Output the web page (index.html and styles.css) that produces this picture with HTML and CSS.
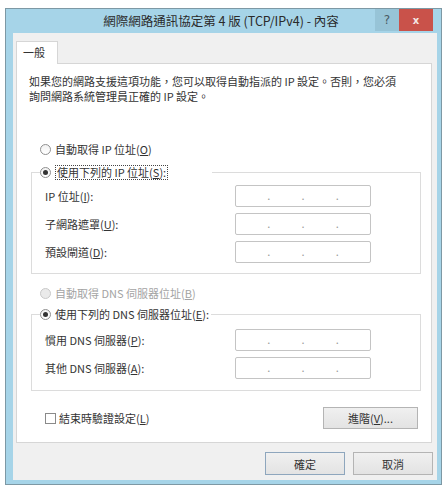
FILE: index.html
```html
<!DOCTYPE html>
<html lang="zh-Hant">
<head>
<meta charset="utf-8">
<title>網際網路通訊協定第 4 版 (TCP/IPv4) - 內容</title>
<link rel="stylesheet" href="styles.css">
</head>
<body>
<div class="window">
  <div class="titlebar">
    <div class="title">網際網路通訊協定第 4 版 (TCP/IPv4) - 內容</div>
    <div class="cap-btn help">?</div>
    <div class="cap-btn close">x</div>
  </div>
  <div class="frame-body">
    <div class="client">
      <div class="tabs"><div class="tab">一般</div></div>
      <div class="panel">
        <p class="desc">如果您的網路支援這項功能，您可以取得自動指派的 IP 設定。否則，您必須<br>詢問網路系統管理員正確的 IP 設定。</p>

        <div class="radio-row r-auto-ip"><span class="radio"></span><span>自動取得 IP 位址(<u>O</u>)</span></div>

        <fieldset class="group g-ip">
          <legend class="legend"><span class="radio checked"></span><span class="focus">使用下列的 IP 位址(<u>S</u>):</span></legend>
          <div class="field"><span class="lbl">IP 位址(<u>I</u>):</span><span class="ipbox"><i>.</i><i>.</i><i>.</i></span></div>
          <div class="field"><span class="lbl">子網路遮罩(<u>U</u>):</span><span class="ipbox"><i>.</i><i>.</i><i>.</i></span></div>
          <div class="field"><span class="lbl">預設閘道(<u>D</u>):</span><span class="ipbox"><i>.</i><i>.</i><i>.</i></span></div>
        </fieldset>

        <div class="radio-row r-auto-dns disabled"><span class="radio"></span><span>自動取得 DNS 伺服器位址(<u>B</u>)</span></div>

        <fieldset class="group g-dns">
          <legend class="legend"><span class="radio checked"></span><span>使用下列的 DNS 伺服器位址(<u>E</u>):</span></legend>
          <div class="field"><span class="lbl">慣用 DNS 伺服器(<u>P</u>):</span><span class="ipbox"><i>.</i><i>.</i><i>.</i></span></div>
          <div class="field"><span class="lbl">其他 DNS 伺服器(<u>A</u>):</span><span class="ipbox"><i>.</i><i>.</i><i>.</i></span></div>
        </fieldset>

        <div class="bottom-row">
          <div class="check-row"><span class="checkbox"></span><span>結束時驗證設定(<u>L</u>)</span></div>
          <button class="btn adv">進階(<u>V</u>)...</button>
        </div>
      </div>
      <div class="footer">
        <button class="btn ok">確定</button>
        <button class="btn">取消</button>
      </div>
    </div>
  </div>
</div>
</body>
</html>
```

FILE: styles.css
```css
* { box-sizing: border-box; }

html, body {
  margin: 0;
  padding: 0;
  background: #ffffff;
}

body {
  font-family: "Noto Sans CJK TC", "Noto Sans", sans-serif;
  font-size: 11px;
  color: #333333;
}

.window {
  margin: 8px 0 0 5px;
  width: 437px;
  height: 477px;
  border: 1px solid #7d98a4;
  background: #a6d4e8;
  display: flex;
  flex-direction: column;
}

.titlebar {
  height: 24px;
  display: flex;
  align-items: flex-start;
  padding-right: 8px;
  flex: none;
}

.title {
  flex: 1;
  text-align: center;
  padding-left: 61px;
  font-size: 12.5px;
  line-height: 24px;
  color: #2a2a2a;
  white-space: nowrap;
}

.cap-btn {
  height: 22px;
  display: flex;
  align-items: center;
  justify-content: center;
  flex: none;
}

.help {
  width: 24px;
  background: #97c4d7;
  color: #4a5a62;
  font-family: "DejaVu Sans", sans-serif;
  font-size: 12px;
}

.close {
  width: 34px;
  background: #c9524a;
  color: #f4e6e4;
  font-family: "DejaVu Sans", sans-serif;
  font-weight: bold;
  font-size: 10px;
}

.frame-body {
  flex: 1;
  padding: 0 4px 4px 7px;
  display: flex;
}

.client {
  flex: 1;
  background: #f0f0f0;
  padding: 8px 5px 5px 3px;
  display: flex;
  flex-direction: column;
}

.tabs {
  display: flex;
  height: 22px;
  flex: none;
}

.tab {
  width: 42px;
  height: 23px;
  background: #ffffff;
  border: 1px solid #d6d6d6;
  border-bottom: none;
  padding-left: 6px;
  line-height: 21px;
  position: relative;
  z-index: 1;
}

.panel {
  height: 380px;
  flex: none;
  background: #ffffff;
  border: 1px solid #d6d6d6;
  display: flex;
  flex-direction: column;
  align-items: flex-start;
}

.desc {
  margin: 10px 0 0 12px;
  line-height: 15px;
  white-space: nowrap;
}

.radio-row {
  display: flex;
  align-items: center;
  height: 16px;
  gap: 4px;
  margin-left: 23px;
}

.r-auto-ip { margin-top: 37px; }
.r-auto-dns { margin-top: 11px; }

.disabled { color: #a3a3a3; }

.radio {
  width: 11px;
  height: 11px;
  border-radius: 50%;
  border: 1px solid #909090;
  background: linear-gradient(#f2f2f2, #ffffff);
  display: flex;
  align-items: center;
  justify-content: center;
  flex: none;
}

.radio.checked::after {
  content: "";
  width: 5px;
  height: 5px;
  border-radius: 50%;
  background: #333333;
}

.disabled .radio {
  border-color: #c9c9c9;
  background: #eaeaea;
}

.group {
  margin: 0 0 0 14px;
  width: 390px;
  min-inline-size: 0;
  border: 1px solid #dcdcdc;
  padding: 0;
}

.g-ip { margin-top: 7px; padding-bottom: 10px; }
.g-dns { margin-top: 5px; padding-bottom: 11px; }

.legend {
  margin-left: 8px;
  padding: 0 2px 0 0;
  height: 16px;
  display: flex;
  align-items: center;
  gap: 4px;
  white-space: nowrap;
}

.g-ip .legend { width: 172px; }

.focus {
  border: 1px dotted #444444;
  line-height: 13px;
  padding: 0 1px;
}

.field {
  display: flex;
  align-items: center;
  height: 22px;
  padding-left: 13px;
  margin-top: 6px;
}

.g-ip .field:first-of-type { margin-top: 5px; }
.g-dns .field:first-of-type { margin-top: 7px; }

.lbl {
  width: 190px;
  flex: none;
}

.ipbox {
  width: 136px;
  height: 22px;
  border: 1px solid #c4c4c4;
  border-radius: 2px;
  background: #ffffff;
  display: flex;
  align-items: center;
  justify-content: space-evenly;
  color: #9a9a9a;
  padding-bottom: 2px;
}

.ipbox i {
  font-style: normal;
  font-size: 11px;
}

.bottom-row {
  margin-top: 16px;
  width: 100%;
  display: flex;
  align-items: center;
  justify-content: space-between;
  padding-left: 28px;
  padding-right: 13px;
  height: 22px;
}

.check-row {
  display: flex;
  align-items: center;
  gap: 3px;
}

.checkbox {
  width: 11px;
  height: 11px;
  border: 1px solid #8a8a8a;
  background: #ffffff;
  flex: none;
}

.btn {
  font-family: "Noto Sans CJK TC", "Noto Sans", sans-serif;
  font-size: 11px;
  color: #333333;
  background: linear-gradient(#f0f0f0, #e3e3e3);
  border: 1px solid #b4b4b4;
  border-radius: 0;
  padding: 0;
  margin: 0;
  height: 22px;
  line-height: 18px;
}

.adv { width: 95px; }

.footer {
  margin-top: 9px;
  display: flex;
  justify-content: flex-end;
  gap: 8px;
  margin-right: -1px;
}

.footer .btn {
  width: 80px;
  height: 23px;
}

.footer .ok {
  border-color: #8ea6bd;
}
```
